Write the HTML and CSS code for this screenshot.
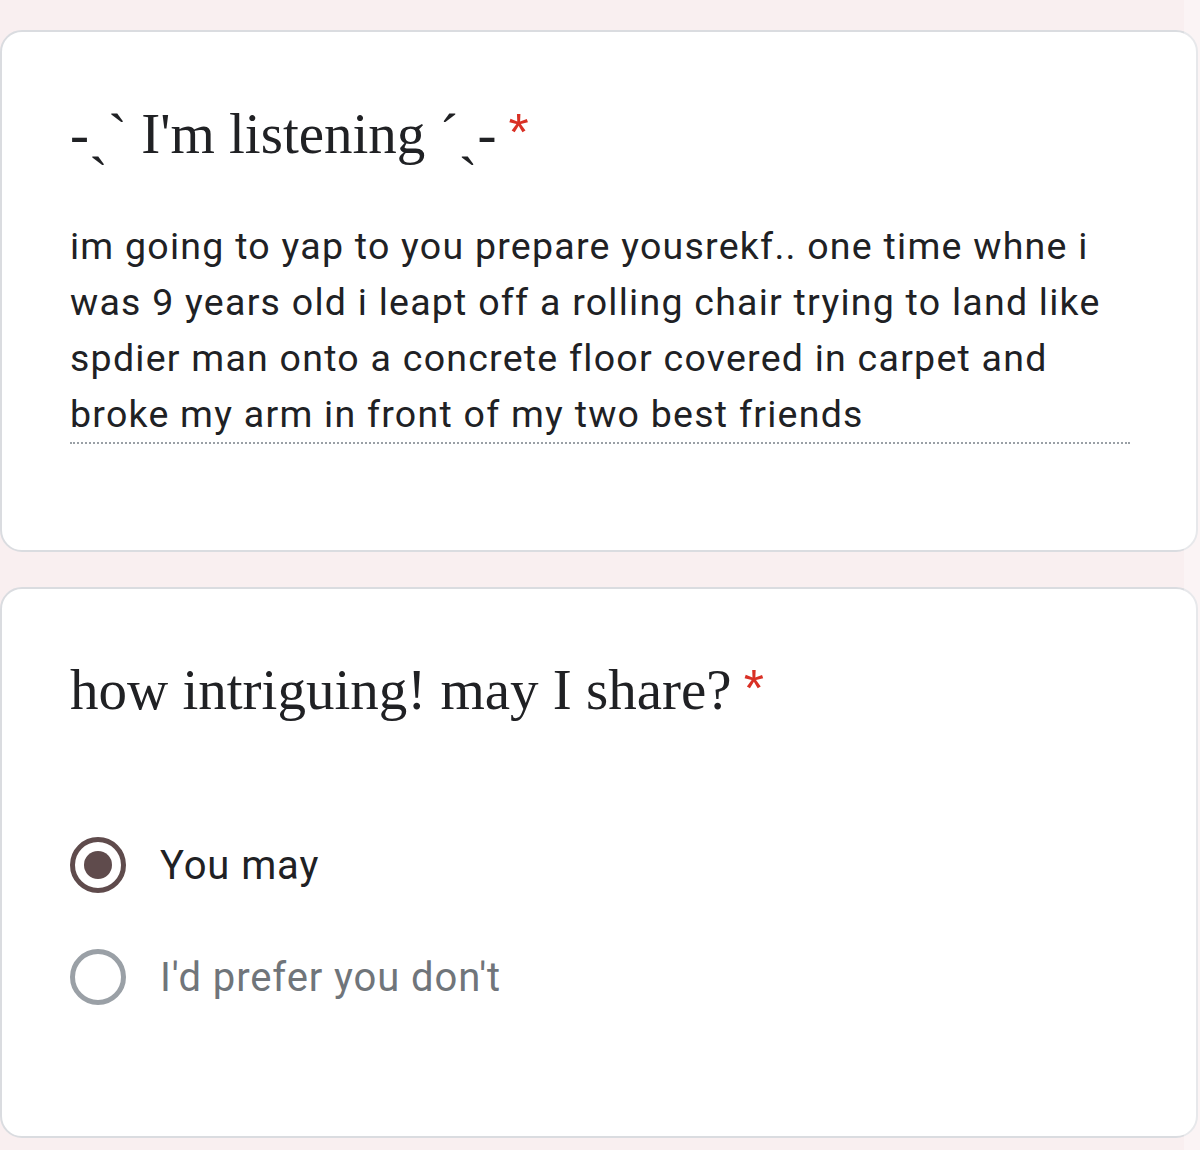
FILE: index.html
```html
<!DOCTYPE html>
<html lang="en">
<head>
    <meta charset="UTF-8">
    <meta name="viewport" content="width=device-width, initial-scale=1.0">
    <title>I'm listening</title>
    <link rel="stylesheet" href="styles.css">
</head>
<body>

    <div class="form">
        <div class="question">
            <div class="title">-ˏˋ I'm listening ˊˎ-<span class="required">*</span></div>
            <div class="answer">im going to yap to you prepare yousrekf.. one time whne i was 9 years old i leapt off a rolling chair trying to land like spdier man onto a concrete floor covered in carpet and broke my arm in front of my two best friends</div>
        </div>

        <div class="question choice">
            <div class="title">how intriguing! may I share?<span class="required">*</span></div>
            <div class="options">
                <label class="option selected">
                    <span class="radio"></span>
                    <span class="label">You may</span>
                </label>
                <label class="option">
                    <span class="radio"></span>
                    <span class="label">I'd prefer you don't</span>
                </label>
            </div>
        </div>
    </div>

    <div class="scroll-strip"></div>

</body>
</html>
```

FILE: styles.css
```css
body {
    margin: 0;
    padding: 0;
    background-color: #f9eff0;
    font-family: Roboto, "Liberation Sans", sans-serif;
    color: #202124;
}
.form {
    display: flex;
    flex-direction: column;
    gap: 35px;
    padding: 30px 2px 0 0;
}
.question {
    background-color: #fff;
    border: 2px solid #dadce0;
    border-radius: 22px;
    padding: 69px 66px 106px 68px;
}
.title {
    font-family: "Liberation Serif", serif;
    font-size: 57px;
    line-height: 65px;
    color: #202124;
}
.required {
    color: #d93025;
    margin-left: 12px;
    font-family: "Liberation Sans", sans-serif;
    font-size: 52px;
    line-height: 0;
    vertical-align: 3px;
}
.answer {
    margin-top: 52px;
    font-size: 37.5px;
    letter-spacing: 1.25px;
    line-height: 56px;
    border-bottom: 2px dotted #9aa0a6;
}
.choice {
    padding-top: 68px;
    padding-bottom: 131px;
}
.options {
    display: flex;
    flex-direction: column;
    gap: 56px;
    margin-top: 115px;
}
.option {
    display: flex;
    align-items: center;
    gap: 34px;
    height: 56px;
}
.radio {
    box-sizing: border-box;
    width: 56px;
    height: 56px;
    border-radius: 50%;
    border: 5px solid #9aa0a6;
    display: flex;
    justify-content: center;
    align-items: center;
}
.option.selected .radio {
    border-color: #5f4b4c;
}
.option.selected .radio::after {
    content: "";
    width: 28px;
    height: 28px;
    border-radius: 50%;
    background-color: #5f4b4c;
}
.label {
    font-size: 40px;
    letter-spacing: 0.9px;
    color: #70757a;
}
.option.selected .label {
    color: #202124;
}
.scroll-strip {
    position: fixed;
    top: 0;
    right: 0;
    width: 16px;
    height: 100%;
    background-color: rgba(255, 255, 255, 0.35);
}
```
